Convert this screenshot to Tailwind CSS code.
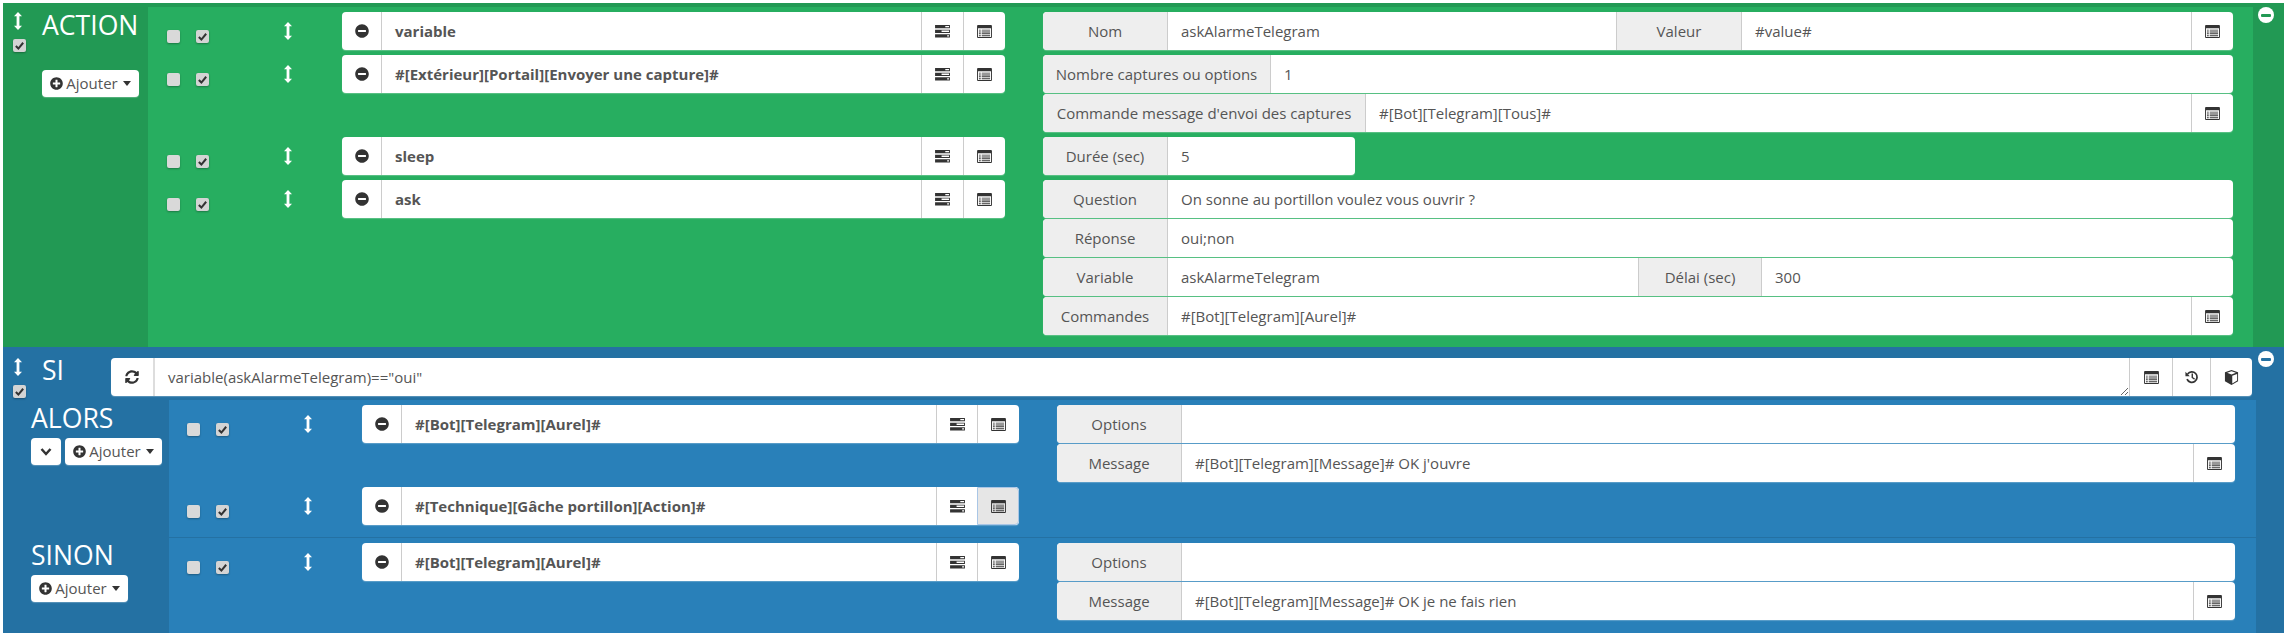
<!DOCTYPE html>
<html lang="fr">
<head>
  <meta charset="UTF-8" />
  <title>Scénario</title>
  <script src="https://cdn.jsdelivr.net/npm/@tailwindcss/browser@4"></script>
</head>
<body class="bg-white font-['Open_Sans',sans-serif] text-[15px] text-[#555]">

  <svg class="hidden">
    <symbol id="minus" viewBox="0 0 512 512"><path fill="currentColor" d="M256 8C119 8 8 119 8 256s111 248 248 248 248-111 248-248S393 8 256 8zM124 296c-6.6 0-12-5.4-12-12v-56c0-6.6 5.4-12 12-12h264c6.600 0 12 5.400 12 12v56c0 6.600-5.400 12-12 12H124z"/></symbol>
    <symbol id="plus" viewBox="0 0 512 512"><path fill="currentColor" d="M256 8C119 8 8 119 8 256s111 248 248 248 248-111 248-248S393 8 256 8zm144 276c0 6.600-5.400 12-12 12h-92v92c0 6.600-5.400 12-12 12h-56c-6.600 0-12-5.400-12-12v-92h-92c-6.600 0-12-5.400-12-12v-56c0-6.600 5.400-12 12-12h92v-92c0-6.600 5.400-12 12-12h56c6.600 0 12 5.400 12 12v92h92c6.600 0 12 5.400 12 12v56z"/></symbol>
    <symbol id="tasks" viewBox="0 0 16 14"><path fill="currentColor" d="M0 0h16v3.500H0zM0 5h16v3.500H0zM0 10h16v3.500H0z"/><path fill="#fff" d="M11 1h4v1.500h-4zM7 6h8v1.500H7zM13 11h2v1.500h-2z"/></symbol>
    <symbol id="list" viewBox="0 0 16 14"><path fill="currentColor" fill-rule="evenodd" d="M1 0h14a1 1 0 0 1 1 1v12a1 1 0 0 1-1 1H1a1 1 0 0 1-1-1V1a1 1 0 0 1 1-1zM1 3.500V13h14V3.500z"/><path fill="currentColor" d="M2 5h2v1H2zM5 5h9v1H5zM2 7h2v1H2zM5 7h9v1H5zM2 9h2v1H2zM5 9h9v1H5zM2 11h2v1H2zM5 11h9v1H5z"/></symbol>
    <symbol id="arrows" viewBox="0 0 8 18"><path fill="currentColor" d="M4 0l4 4.200H5.400v9.600H8L4 18l-4-4.200h2.600V4.200H0z"/></symbol>
    <symbol id="check" viewBox="0 0 12 12"><path fill="none" stroke="currentColor" stroke-width="2.200" d="M2 6.500l2.800 2.800L10 3"/></symbol>
    <symbol id="sync" viewBox="0 0 512 512"><path fill="currentColor" d="M370.720 133.280C339.458 104.008 298.888 87.962 255.848 88c-77.458.068-144.328 53.178-162.791 126.850-1.344 5.363-6.122 9.150-11.651 9.150H24.103c-7.498 0-13.194-6.807-11.807-14.176C33.933 94.924 134.813 8 256 8c66.448 0 126.791 26.136 171.315 68.685L463.030 40.970C478.149 25.851 504 36.559 504 57.941V192c0 13.255-10.745 24-24 24H345.941c-21.382 0-32.090-25.851-16.971-40.971l41.750-41.749zM32 296h134.059c21.382 0 32.090 25.851 16.971 40.971l-41.750 41.750c31.262 29.273 71.835 45.319 114.876 45.280 77.418-.070 144.315-53.144 162.787-126.849 1.344-5.363 6.122-9.150 11.651-9.150h57.304c7.498 0 13.193 6.807 11.807 14.176C478.067 417.076 377.187 504 256 504c-66.448 0-126.791-26.136-171.315-68.685L48.970 471.030C33.851 486.149 8 475.441 8 454.059V320c0-13.255 10.745-24 24-24z"/></symbol>
    <symbol id="history" viewBox="0 0 16 16"><path fill="none" stroke="currentColor" stroke-width="2" d="M3 4.500A6 6 0 1 1 2.300 10.500"/><path fill="currentColor" d="M.5 2v5h5zM7.500 4h1.600v4.200l2.300 1.600-.9 1.200-3-2.100z"/></symbol>
    <symbol id="cube" viewBox="0 0 16 16"><path fill="currentColor" d="M8 0l7 2.500v9.500L8 16l-7-4V2.500z"/><path fill="#fff" d="M8 1.300l4.700 1.700L8 4.700 3.300 3zM8.800 6.100L14 4.200v7.100l-5.200 3z"/></symbol>
  </svg>

  <div class="mt-[3px] ml-[3px] w-[2281px]">

    <!-- ACTION -->
    <div class="relative flex h-[344px] bg-[#229954]">
      <div class="flex w-[145px] shrink-0">
        <div class="flex w-[39px] flex-col pl-[10px] pt-[9px] text-white">
          <svg class="ml-[1px] h-[18px] w-[8px]"><use href="#arrows"/></svg>
          <span class="mt-[9px] flex h-[13px] w-[13px] items-center justify-center rounded-[2px] bg-[#d4d4d4] text-[#333] shadow-[0_1px_2px_rgba(0,0,0,0.3)]"><svg class="h-[11px] w-[11px]"><use href="#check"/></svg></span>
        </div>
        <div class="pt-[8px]">
          <div class="text-[26.6px] leading-[28px] text-white">ACTION</div>
          <button class="mt-[31px] flex h-[27px] w-[97px] items-center justify-center gap-[3px] rounded-[4px] bg-white text-[#555] shadow-[0_1px_1px_rgba(255,255,255,0.25)]"><svg class="h-[13px] w-[13px] text-[#333]"><use href="#plus"/></svg>Ajouter<span class="ml-[2px] h-0 w-0 border-x-[4px] border-t-[5px] border-x-transparent border-t-[#333]"></span></button>
        </div>
      </div>

      <div class="mt-[4px] flex w-[2105px] flex-col gap-[5px] bg-[#27ae60] pt-[5px]">
        <!-- variable -->
        <div class="flex">
          <div class="flex w-[857px] shrink-0 pl-[19px]">
            <span class="mt-[18px] h-[13px] w-[13px] rounded-[2px] bg-[#d9d9d9] shadow-[0_1px_2px_rgba(0,0,0,0.3)]"></span>
            <span class="ml-[16px] mt-[18px] flex h-[13px] w-[13px] items-center justify-center rounded-[2px] bg-[#d4d4d4] text-[#333] shadow-[0_1px_2px_rgba(0,0,0,0.3)]"><svg class="h-[11px] w-[11px]"><use href="#check"/></svg></span>
            <svg class="ml-[75px] mt-[10px] h-[18px] w-[8px] text-white"><use href="#arrows"/></svg>
            <div class="ml-[50px] flex h-[38px] w-[663px] rounded-[4px] bg-white shadow-[0_1px_1px_rgba(255,255,255,0.25)]">
              <span class="flex w-[40px] items-center justify-center border-r border-[#ccc] text-[#333]"><svg class="h-[14px] w-[14px]"><use href="#minus"/></svg></span>
              <span class="flex flex-1 items-center px-[13px] font-bold text-[#555]">variable</span>
              <span class="flex w-[42px] items-center justify-center border-l border-[#ccc] text-[#333]"><svg class="h-[13px] w-[15px]"><use href="#tasks"/></svg></span>
              <span class="flex w-[42px] items-center justify-center border-l border-[#ccc] text-[#333]"><svg class="h-[13px] w-[15px]"><use href="#list"/></svg></span>
            </div>
          </div>
          <div class="ml-[38px] flex w-[1190px] flex-col gap-px">
            <div class="flex h-[38px] rounded-[4px] bg-white shadow-[0_1px_1px_rgba(255,255,255,0.25)]">
              <span class="flex w-[125px] items-center justify-center rounded-l-[4px] border-r border-[#ccc] bg-[#eee]">Nom</span>
              <span class="flex w-[448px] items-center px-[13px]">askAlarmeTelegram</span>
              <span class="flex w-[126px] items-center justify-center border-x border-[#ccc] bg-[#eee]">Valeur</span>
              <span class="flex flex-1 items-center px-[13px]">#value#</span>
              <span class="flex w-[42px] items-center justify-center border-l border-[#ccc] text-[#333]"><svg class="h-[13px] w-[15px]"><use href="#list"/></svg></span>
            </div>
          </div>
        </div>
        <!-- capture -->
        <div class="flex">
          <div class="flex w-[857px] shrink-0 pl-[19px]">
            <span class="mt-[18px] h-[13px] w-[13px] rounded-[2px] bg-[#d9d9d9] shadow-[0_1px_2px_rgba(0,0,0,0.3)]"></span>
            <span class="ml-[16px] mt-[18px] flex h-[13px] w-[13px] items-center justify-center rounded-[2px] bg-[#d4d4d4] text-[#333] shadow-[0_1px_2px_rgba(0,0,0,0.3)]"><svg class="h-[11px] w-[11px]"><use href="#check"/></svg></span>
            <svg class="ml-[75px] mt-[10px] h-[18px] w-[8px] text-white"><use href="#arrows"/></svg>
            <div class="ml-[50px] flex h-[38px] w-[663px] rounded-[4px] bg-white shadow-[0_1px_1px_rgba(255,255,255,0.25)]">
              <span class="flex w-[40px] items-center justify-center border-r border-[#ccc] text-[#333]"><svg class="h-[14px] w-[14px]"><use href="#minus"/></svg></span>
              <span class="flex flex-1 items-center px-[13px] font-bold text-[#555]">#[Extérieur][Portail][Envoyer une capture]#</span>
              <span class="flex w-[42px] items-center justify-center border-l border-[#ccc] text-[#333]"><svg class="h-[13px] w-[15px]"><use href="#tasks"/></svg></span>
              <span class="flex w-[42px] items-center justify-center border-l border-[#ccc] text-[#333]"><svg class="h-[13px] w-[15px]"><use href="#list"/></svg></span>
            </div>
          </div>
          <div class="ml-[38px] flex w-[1190px] flex-col gap-px">
            <div class="flex h-[38px] rounded-[4px] bg-white shadow-[0_1px_1px_rgba(255,255,255,0.25)]">
              <span class="flex w-[228px] items-center justify-center rounded-l-[4px] border-r border-[#ccc] bg-[#eee]">Nombre captures ou options</span>
              <span class="flex flex-1 items-center px-[13px]">1</span>
            </div>
            <div class="flex h-[38px] rounded-[4px] bg-white shadow-[0_1px_1px_rgba(255,255,255,0.25)]">
              <span class="flex w-[323px] items-center justify-center rounded-l-[4px] border-r border-[#ccc] bg-[#eee]">Commande message d'envoi des captures</span>
              <span class="flex flex-1 items-center px-[13px]">#[Bot][Telegram][Tous]#</span>
              <span class="flex w-[42px] items-center justify-center border-l border-[#ccc] text-[#333]"><svg class="h-[13px] w-[15px]"><use href="#list"/></svg></span>
            </div>
          </div>
        </div>
        <!-- sleep -->
        <div class="flex">
          <div class="flex w-[857px] shrink-0 pl-[19px]">
            <span class="mt-[18px] h-[13px] w-[13px] rounded-[2px] bg-[#d9d9d9] shadow-[0_1px_2px_rgba(0,0,0,0.3)]"></span>
            <span class="ml-[16px] mt-[18px] flex h-[13px] w-[13px] items-center justify-center rounded-[2px] bg-[#d4d4d4] text-[#333] shadow-[0_1px_2px_rgba(0,0,0,0.3)]"><svg class="h-[11px] w-[11px]"><use href="#check"/></svg></span>
            <svg class="ml-[75px] mt-[10px] h-[18px] w-[8px] text-white"><use href="#arrows"/></svg>
            <div class="ml-[50px] flex h-[38px] w-[663px] rounded-[4px] bg-white shadow-[0_1px_1px_rgba(255,255,255,0.25)]">
              <span class="flex w-[40px] items-center justify-center border-r border-[#ccc] text-[#333]"><svg class="h-[14px] w-[14px]"><use href="#minus"/></svg></span>
              <span class="flex flex-1 items-center px-[13px] font-bold text-[#555]">sleep</span>
              <span class="flex w-[42px] items-center justify-center border-l border-[#ccc] text-[#333]"><svg class="h-[13px] w-[15px]"><use href="#tasks"/></svg></span>
              <span class="flex w-[42px] items-center justify-center border-l border-[#ccc] text-[#333]"><svg class="h-[13px] w-[15px]"><use href="#list"/></svg></span>
            </div>
          </div>
          <div class="ml-[38px] flex w-[1190px] flex-col gap-px">
            <div class="flex h-[38px] w-[312px] rounded-[4px] bg-white shadow-[0_1px_1px_rgba(255,255,255,0.25)]">
              <span class="flex w-[125px] items-center justify-center rounded-l-[4px] border-r border-[#ccc] bg-[#eee]">Durée (sec)</span>
              <span class="flex flex-1 items-center px-[13px]">5</span>
            </div>
          </div>
        </div>
        <!-- ask -->
        <div class="flex">
          <div class="flex w-[857px] shrink-0 pl-[19px]">
            <span class="mt-[18px] h-[13px] w-[13px] rounded-[2px] bg-[#d9d9d9] shadow-[0_1px_2px_rgba(0,0,0,0.3)]"></span>
            <span class="ml-[16px] mt-[18px] flex h-[13px] w-[13px] items-center justify-center rounded-[2px] bg-[#d4d4d4] text-[#333] shadow-[0_1px_2px_rgba(0,0,0,0.3)]"><svg class="h-[11px] w-[11px]"><use href="#check"/></svg></span>
            <svg class="ml-[75px] mt-[10px] h-[18px] w-[8px] text-white"><use href="#arrows"/></svg>
            <div class="ml-[50px] flex h-[38px] w-[663px] rounded-[4px] bg-white shadow-[0_1px_1px_rgba(255,255,255,0.25)]">
              <span class="flex w-[40px] items-center justify-center border-r border-[#ccc] text-[#333]"><svg class="h-[14px] w-[14px]"><use href="#minus"/></svg></span>
              <span class="flex flex-1 items-center px-[13px] font-bold text-[#555]">ask</span>
              <span class="flex w-[42px] items-center justify-center border-l border-[#ccc] text-[#333]"><svg class="h-[13px] w-[15px]"><use href="#tasks"/></svg></span>
              <span class="flex w-[42px] items-center justify-center border-l border-[#ccc] text-[#333]"><svg class="h-[13px] w-[15px]"><use href="#list"/></svg></span>
            </div>
          </div>
          <div class="ml-[38px] flex w-[1190px] flex-col gap-px">
            <div class="flex h-[38px] rounded-[4px] bg-white shadow-[0_1px_1px_rgba(255,255,255,0.25)]">
              <span class="flex w-[125px] items-center justify-center rounded-l-[4px] border-r border-[#ccc] bg-[#eee]">Question</span>
              <span class="flex flex-1 items-center px-[13px]">On sonne au portillon voulez vous ouvrir ?</span>
            </div>
            <div class="flex h-[38px] rounded-[4px] bg-white shadow-[0_1px_1px_rgba(255,255,255,0.25)]">
              <span class="flex w-[125px] items-center justify-center rounded-l-[4px] border-r border-[#ccc] bg-[#eee]">Réponse</span>
              <span class="flex flex-1 items-center px-[13px]">oui;non</span>
            </div>
            <div class="flex h-[38px] rounded-[4px] bg-white shadow-[0_1px_1px_rgba(255,255,255,0.25)]">
              <span class="flex w-[125px] items-center justify-center rounded-l-[4px] border-r border-[#ccc] bg-[#eee]">Variable</span>
              <span class="flex w-[470px] items-center px-[13px]">askAlarmeTelegram</span>
              <span class="flex w-[124px] items-center justify-center border-x border-[#ccc] bg-[#eee]">Délai (sec)</span>
              <span class="flex flex-1 items-center px-[13px]">300</span>
            </div>
            <div class="flex h-[38px] rounded-[4px] bg-white shadow-[0_1px_1px_rgba(255,255,255,0.25)]">
              <span class="flex w-[125px] items-center justify-center rounded-l-[4px] border-r border-[#ccc] bg-[#eee]">Commandes</span>
              <span class="flex flex-1 items-center px-[13px]">#[Bot][Telegram][Aurel]#</span>
              <span class="flex w-[42px] items-center justify-center border-l border-[#ccc] text-[#333]"><svg class="h-[13px] w-[15px]"><use href="#list"/></svg></span>
            </div>
          </div>
        </div>
      </div>

      <button class="absolute left-[2255px] top-[4px] flex h-[16px] w-[16px] items-center justify-center rounded-full bg-white text-[#229954]"><span class="h-[3px] w-[10px] rounded-[1px] bg-[#229954]"></span></button>
    </div>

    <!-- SI -->
    <div class="relative h-[286px] bg-[#2471a3]">
      <div class="flex h-[53px]">
        <div class="flex w-[39px] flex-col pl-[10px] pt-[11px] text-white">
          <svg class="ml-[1px] h-[18px] w-[8px]"><use href="#arrows"/></svg>
          <span class="mt-[9px] flex h-[13px] w-[13px] items-center justify-center rounded-[2px] bg-[#d4d4d4] text-[#333] shadow-[0_1px_2px_rgba(0,0,0,0.3)]"><svg class="h-[11px] w-[11px]"><use href="#check"/></svg></span>
        </div>
        <div class="w-[69px] pt-[9px] text-[26.6px] leading-[28px] text-white">SI</div>
        <div class="mt-[11px] flex h-[38px] w-[2141px] rounded-[4px] bg-white shadow-[0_1px_1px_rgba(255,255,255,0.25)]">
          <span class="flex w-[44px] items-center justify-center border-r-2 border-[#ddd] text-[#333]"><svg class="h-[14px] w-[14px]"><use href="#sync"/></svg></span>
          <textarea class="h-full flex-1 px-[13px] py-[9px] leading-[20px] text-[#555] outline-none">variable(askAlarmeTelegram)=="oui"</textarea>
          <span class="flex w-[43px] items-center justify-center border-l border-[#ccc] text-[#333]"><svg class="h-[13px] w-[15px]"><use href="#list"/></svg></span>
          <span class="flex w-[38px] items-center justify-center border-l border-[#ccc] text-[#333]"><svg class="h-[14px] w-[14px]"><use href="#history"/></svg></span>
          <span class="flex w-[42px] items-center justify-center border-l border-[#ccc] text-[#333]"><svg class="h-[15px] w-[15px]"><use href="#cube"/></svg></span>
        </div>
      </div>

      <!-- ALORS -->
      <div class="flex">
        <div class="w-[166px] shrink-0 pl-[28px] pt-[4px]">
          <div class="text-[26.6px] leading-[28px] text-white">ALORS</div>
          <div class="mt-[6px] flex gap-[4px]">
            <button class="flex h-[27px] w-[30px] items-center justify-center rounded-[4px] bg-white text-[#333] shadow-[0_1px_1px_rgba(255,255,255,0.25)]"><svg class="h-[10px] w-[12px]" viewBox="0 0 12 10"><path fill="none" stroke="currentColor" stroke-width="2.500" d="M1.500 2l4.500 5 4.500-5"/></svg></button>
            <button class="flex h-[27px] w-[97px] items-center justify-center gap-[3px] rounded-[4px] bg-white text-[#555] shadow-[0_1px_1px_rgba(255,255,255,0.25)]"><svg class="h-[13px] w-[13px] text-[#333]"><use href="#plus"/></svg>Ajouter<span class="ml-[2px] h-0 w-0 border-x-[4px] border-t-[5px] border-x-transparent border-t-[#333]"></span></button>
          </div>
        </div>
        <div class="flex h-[138px] w-[2087px] flex-col gap-[5px] border-b border-[#2471a3] bg-[#2980b9] pt-[5px]">
          <div class="flex">
            <div class="flex w-[850px] shrink-0 pl-[18px]">
              <span class="mt-[18px] h-[13px] w-[13px] rounded-[2px] bg-[#d9d9d9] shadow-[0_1px_2px_rgba(0,0,0,0.3)]"></span>
              <span class="ml-[16px] mt-[18px] flex h-[13px] w-[13px] items-center justify-center rounded-[2px] bg-[#d4d4d4] text-[#333] shadow-[0_1px_2px_rgba(0,0,0,0.3)]"><svg class="h-[11px] w-[11px]"><use href="#check"/></svg></span>
              <svg class="ml-[75px] mt-[10px] h-[18px] w-[8px] text-white"><use href="#arrows"/></svg>
              <div class="ml-[50px] flex h-[38px] w-[657px] rounded-[4px] bg-white shadow-[0_1px_1px_rgba(255,255,255,0.25)]">
                <span class="flex w-[40px] items-center justify-center border-r border-[#ccc] text-[#333]"><svg class="h-[14px] w-[14px]"><use href="#minus"/></svg></span>
                <span class="flex flex-1 items-center px-[13px] font-bold text-[#555]">#[Bot][Telegram][Aurel]#</span>
                <span class="flex w-[41px] items-center justify-center border-l border-[#ccc] text-[#333]"><svg class="h-[13px] w-[15px]"><use href="#tasks"/></svg></span>
                <span class="flex w-[42px] items-center justify-center border-l border-[#ccc] text-[#333]"><svg class="h-[13px] w-[15px]"><use href="#list"/></svg></span>
              </div>
            </div>
            <div class="ml-[38px] flex w-[1178px] flex-col gap-px">
              <div class="flex h-[38px] rounded-[4px] bg-white shadow-[0_1px_1px_rgba(255,255,255,0.25)]">
                <span class="flex w-[125px] items-center justify-center rounded-l-[4px] border-r border-[#ccc] bg-[#eee]">Options</span>
                <span class="flex flex-1"></span>
              </div>
              <div class="flex h-[38px] rounded-[4px] bg-white shadow-[0_1px_1px_rgba(255,255,255,0.25)]">
                <span class="flex w-[125px] items-center justify-center rounded-l-[4px] border-r border-[#ccc] bg-[#eee]">Message</span>
                <span class="flex flex-1 items-center px-[13px]">#[Bot][Telegram][Message]# OK j'ouvre</span>
                <span class="flex w-[42px] items-center justify-center border-l border-[#ccc] text-[#333]"><svg class="h-[13px] w-[15px]"><use href="#list"/></svg></span>
              </div>
            </div>
          </div>
          <div class="flex">
            <div class="flex w-[850px] shrink-0 pl-[18px]">
              <span class="mt-[18px] h-[13px] w-[13px] rounded-[2px] bg-[#d9d9d9] shadow-[0_1px_2px_rgba(0,0,0,0.3)]"></span>
              <span class="ml-[16px] mt-[18px] flex h-[13px] w-[13px] items-center justify-center rounded-[2px] bg-[#d4d4d4] text-[#333] shadow-[0_1px_2px_rgba(0,0,0,0.3)]"><svg class="h-[11px] w-[11px]"><use href="#check"/></svg></span>
              <svg class="ml-[75px] mt-[10px] h-[18px] w-[8px] text-white"><use href="#arrows"/></svg>
              <div class="ml-[50px] flex h-[38px] w-[657px] rounded-[4px] bg-white shadow-[0_1px_1px_rgba(255,255,255,0.25)]">
                <span class="flex w-[40px] items-center justify-center border-r border-[#ccc] text-[#333]"><svg class="h-[14px] w-[14px]"><use href="#minus"/></svg></span>
                <span class="flex flex-1 items-center px-[13px] font-bold text-[#555]">#[Technique][Gâche portillon][Action]#</span>
                <span class="flex w-[41px] items-center justify-center border-l border-[#ccc] text-[#333]"><svg class="h-[13px] w-[15px]"><use href="#tasks"/></svg></span>
                <span class="flex w-[42px] items-center justify-center rounded-r-[4px] border border-[#a9c6e6] bg-[#e6e6e6] text-[#333]"><svg class="h-[13px] w-[15px]"><use href="#list"/></svg></span>
              </div>
            </div>
          </div>
        </div>
      </div>

      <!-- SINON -->
      <div class="flex">
        <div class="w-[166px] shrink-0 pl-[28px] pt-[3px]">
          <div class="text-[26.6px] leading-[28px] text-white">SINON</div>
          <button class="mt-[6px] flex h-[27px] w-[97px] items-center justify-center gap-[3px] rounded-[4px] bg-white text-[#555] shadow-[0_1px_1px_rgba(255,255,255,0.25)]"><svg class="h-[13px] w-[13px] text-[#333]"><use href="#plus"/></svg>Ajouter<span class="ml-[2px] h-0 w-0 border-x-[4px] border-t-[5px] border-x-transparent border-t-[#333]"></span></button>
        </div>
        <div class="flex h-[95px] w-[2087px] bg-[#2980b9] pt-[5px]">
          <div class="flex w-[850px] shrink-0 pl-[18px]">
            <span class="mt-[18px] h-[13px] w-[13px] rounded-[2px] bg-[#d9d9d9] shadow-[0_1px_2px_rgba(0,0,0,0.3)]"></span>
            <span class="ml-[16px] mt-[18px] flex h-[13px] w-[13px] items-center justify-center rounded-[2px] bg-[#d4d4d4] text-[#333] shadow-[0_1px_2px_rgba(0,0,0,0.3)]"><svg class="h-[11px] w-[11px]"><use href="#check"/></svg></span>
            <svg class="ml-[75px] mt-[10px] h-[18px] w-[8px] text-white"><use href="#arrows"/></svg>
            <div class="ml-[50px] flex h-[38px] w-[657px] rounded-[4px] bg-white shadow-[0_1px_1px_rgba(255,255,255,0.25)]">
              <span class="flex w-[40px] items-center justify-center border-r border-[#ccc] text-[#333]"><svg class="h-[14px] w-[14px]"><use href="#minus"/></svg></span>
              <span class="flex flex-1 items-center px-[13px] font-bold text-[#555]">#[Bot][Telegram][Aurel]#</span>
              <span class="flex w-[41px] items-center justify-center border-l border-[#ccc] text-[#333]"><svg class="h-[13px] w-[15px]"><use href="#tasks"/></svg></span>
              <span class="flex w-[42px] items-center justify-center border-l border-[#ccc] text-[#333]"><svg class="h-[13px] w-[15px]"><use href="#list"/></svg></span>
            </div>
          </div>
          <div class="ml-[38px] flex w-[1178px] flex-col gap-px">
            <div class="flex h-[38px] rounded-[4px] bg-white shadow-[0_1px_1px_rgba(255,255,255,0.25)]">
              <span class="flex w-[125px] items-center justify-center rounded-l-[4px] border-r border-[#ccc] bg-[#eee]">Options</span>
              <span class="flex flex-1"></span>
            </div>
            <div class="flex h-[38px] rounded-[4px] bg-white shadow-[0_1px_1px_rgba(255,255,255,0.25)]">
              <span class="flex w-[125px] items-center justify-center rounded-l-[4px] border-r border-[#ccc] bg-[#eee]">Message</span>
              <span class="flex flex-1 items-center px-[13px]">#[Bot][Telegram][Message]# OK je ne fais rien</span>
              <span class="flex w-[42px] items-center justify-center border-l border-[#ccc] text-[#333]"><svg class="h-[13px] w-[15px]"><use href="#list"/></svg></span>
            </div>
          </div>
        </div>
      </div>

      <button class="absolute left-[2255px] top-[4px] flex h-[16px] w-[16px] items-center justify-center rounded-full bg-white"><span class="h-[3px] w-[10px] rounded-[1px] bg-[#2471a3]"></span></button>
    </div>

  </div>

</body>
</html>
